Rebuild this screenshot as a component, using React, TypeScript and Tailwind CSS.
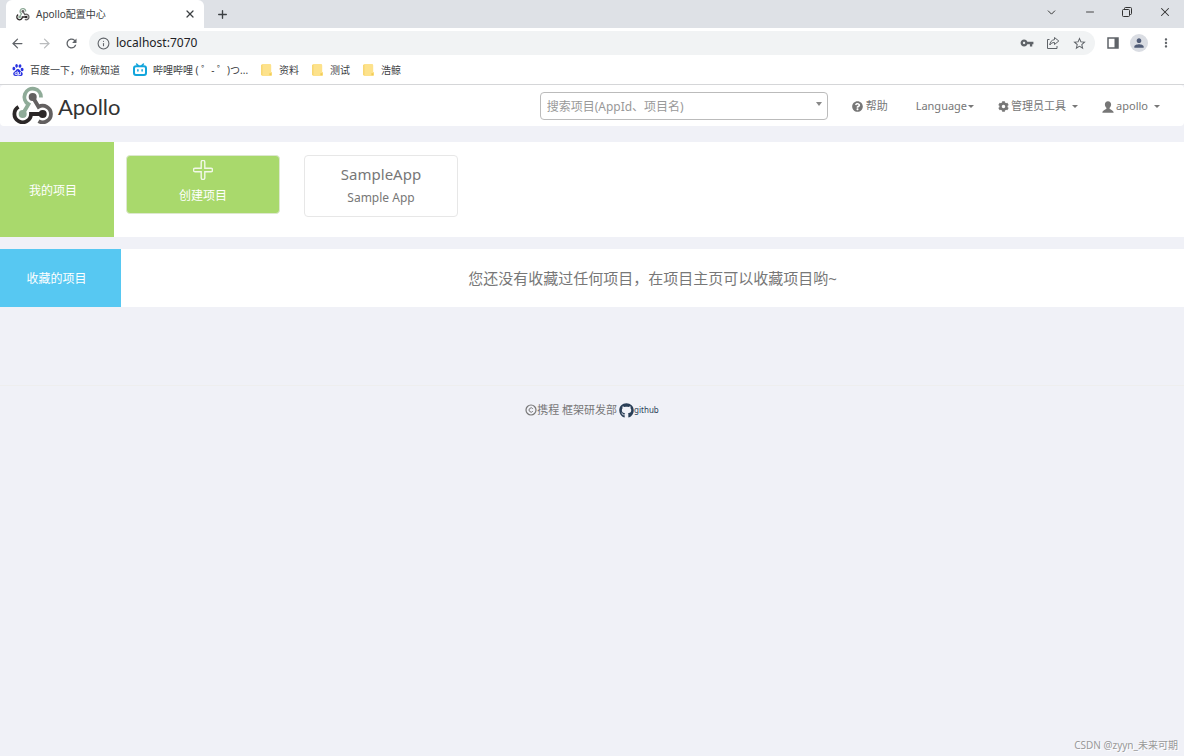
import React from 'react';
import { ArrowLeft, ArrowRight, ChevronDown, Info, Minus, Plus, X } from 'lucide-react';
import { FaCog, FaGithub, FaQuestionCircle } from 'react-icons/fa';
import { MdMoreVert, MdPerson, MdRefresh, MdStarBorder, MdVpnKey } from 'react-icons/md';
import { SiBaidu } from 'react-icons/si';

const ApolloMark: React.FC<{ className?: string }> = ({ className }) => (
    <svg viewBox="0 0 42 38" className={className} fill="none" strokeWidth="3.8" aria-hidden="true">
        <path d="M30.7 28H19A8.3 8.3 0 1 1 6.5 20.8" stroke="#2b2727" />
        <path d="M20.7 11L26.5 20.8A8.3 8.3 0 1 1 26.5 35.2" stroke="#636060" />
        <path d="M10.7 28L16.5 18.2A8.3 8.3 0 1 1 29 11.5" stroke="#8fab98" />
        <circle cx="20.7" cy="11" r="4" fill="#636060" />
        <circle cx="10.7" cy="28" r="4" fill="#8fab98" />
        <circle cx="30.7" cy="28" r="4" fill="#2b2727" />
    </svg>
);

const BilibiliIcon = () => (
    <svg viewBox="0 0 14 14" className="h-3.5 w-3.5" fill="none" stroke="#12a5dc" strokeWidth="2" strokeLinecap="round" aria-hidden="true">
        <rect x="1" y="3.2" width="12" height="8.8" rx="2" />
        <path d="M3.6 1l1.6 1.6M10.4 1L8.8 2.6" strokeWidth="1.5" />
        <path d="M4.9 6.8v1.2M9.1 6.8v1.2" strokeWidth="1.5" />
    </svg>
);

const FolderIcon = () => (
    <svg viewBox="0 0 12 12" className="h-3 w-3" aria-hidden="true">
        <path d="M1.5 0H9a1.2 1.2 0 0 1 1.2 1.2V8h.8v3a1 1 0 0 1-1 1H1.5A1.2 1.2 0 0 1 .3 10.8V1.2A1.2 1.2 0 0 1 1.5 0z" fill="#fde28c" />
        <path d="M.8 1v10" stroke="#f5cf5c" />
        <path d="M8.4 11.2V9.2h2v2z" fill="#f0cb55" />
    </svg>
);

const ShareIcon = () => (
    <svg viewBox="0 0 14 14" className="h-3.5 w-3.5" fill="none" stroke="#5f6368" strokeLinejoin="round" aria-hidden="true">
        <path d="M3.5 3.5h-2v9H11V10" />
        <path d="M8.5 1.5L12.8 5 8.5 8.5v-2c-2 0-3.5.7-4.7 2.5.2-3 1.8-5 4.7-5.4z" />
    </svg>
);

const PanelIcon = () => (
    <svg viewBox="0 0 12 12" className="h-3 w-3" aria-hidden="true">
        <path d="M1 1h10v10H1z" fill="none" stroke="#5f6368" strokeWidth="1.5" />
        <path d="M7.5 1H11v10H7.5z" fill="#5f6368" />
    </svg>
);

const RestoreIcon = () => (
    <svg viewBox="0 0 10 10" className="h-2.5 w-2.5" fill="none" stroke="#333" aria-hidden="true">
        <rect x=".5" y="2.5" width="7" height="7" rx="1" />
        <path d="M2.5 2.5v-1a1 1 0 0 1 1-1h5a1 1 0 0 1 1 1v5a1 1 0 0 1-1 1h-1" />
    </svg>
);

const UserIcon = () => (
    <svg viewBox="0 0 12 12" className="h-3 w-3" fill="currentColor" aria-hidden="true">
        <path d="M6 .3c2 0 3.1 1.4 3.1 3.2 0 1.3-.6 2.6-1.5 3.3v.9c.3.7 3.7 1.3 4 3.6v.5H.4v-.5C.7 9 4.1 8.4 4.4 7.7v-.9C3.5 6.1 2.9 4.8 2.9 3.5 2.9 1.7 4 .3 6 .3z" />
    </svg>
);

const PlusOutline = () => (
    <svg viewBox="0 0 20 20" className="h-5 w-5" fill="none" stroke="#f1f8e8" strokeWidth="1.4" aria-hidden="true">
        <path d="M8.2 2.2a1.8 1.8 0 0 1 3.6 0v6h6a1.8 1.8 0 0 1 0 3.6h-6v6a1.8 1.8 0 0 1-3.6 0v-6h-6a1.8 1.8 0 0 1 0-3.6h6z" />
    </svg>
);

const CopyrightIcon = () => (
    <svg viewBox="0 0 12 12" className="h-3 w-3" fill="none" stroke="currentColor" aria-hidden="true">
        <circle cx="6" cy="6" r="5" strokeWidth="1.2" />
        <path d="M7.8 4.7A2.1 2.1 0 1 0 7.8 7.3" />
    </svg>
);

const Caret = () => <span className="border-x-[3px] border-t-[3px] border-x-transparent border-t-current" />;

const bookmarks = [
    { label: '百度一下，你就知道', icon: <SiBaidu size={12} color="#2932e1" /> },
    { label: '哔哩哔哩 ( ゜- ゜)つ...', icon: <BilibiliIcon /> },
    { label: '资料', icon: <FolderIcon /> },
    { label: '测试', icon: <FolderIcon /> },
    { label: '浩鲸', icon: <FolderIcon /> },
];

const BrowserChrome = () => (
    <div className="border-b border-[#d5d6d8] bg-white text-[#3c4043]">
        {/* Tab strip */}
        <div className="flex h-7 items-center bg-[#dee1e6] pl-1.5">
            <div className="flex h-7 w-[198px] items-center rounded-t-md bg-white pl-2.5 pr-2">
                <ApolloMark className="h-3.5 w-3.5" />
                <span className="ml-1.5 flex-1 text-[10px]">Apollo配置中心</span>
                <button aria-label="Close tab"><X size={12} strokeWidth={2.5} /></button>
            </div>
            <button className="ml-3" aria-label="New tab"><Plus size={13} strokeWidth={2.5} /></button>
            <div className="mb-1 ml-auto flex items-center gap-[26px] pr-3 text-[#333]">
                <button aria-label="Search tabs"><ChevronDown size={13} strokeWidth={1.8} /></button>
                <button aria-label="Minimize"><Minus size={12} strokeWidth={1.8} /></button>
                <button aria-label="Restore"><RestoreIcon /></button>
                <button aria-label="Close"><X size={14} strokeWidth={1.8} /></button>
            </div>
        </div>

        {/* Toolbar */}
        <div className="flex h-[30px] items-center pl-2.5 pr-[11px]">
            <button aria-label="Back"><ArrowLeft size={15} color="#5f6368" /></button>
            <button className="ml-3" aria-label="Forward"><ArrowRight size={15} color="#babcbe" /></button>
            <button className="ml-3" aria-label="Reload"><MdRefresh size={15} color="#5f6368" /></button>
            <div className="ml-2.5 mr-3 flex h-6 flex-1 items-center rounded-full bg-[#f1f3f4] px-2">
                <Info size={13} color="#5f6368" />
                <input
                    aria-label="Address"
                    defaultValue="localhost:7070"
                    className="ml-1.5 min-w-0 flex-1 bg-transparent text-xs text-[#202124] outline-none"
                />
                <div className="flex items-center gap-3 text-[#5f6368]">
                    <button aria-label="Passwords"><MdVpnKey size={14} /></button>
                    <button aria-label="Share"><ShareIcon /></button>
                    <button aria-label="Bookmark"><MdStarBorder size={15} /></button>
                </div>
            </div>
            <div className="flex items-center gap-[11px] text-[#5f6368]">
                <button aria-label="Side panel"><PanelIcon /></button>
                <button className="flex h-[18px] w-[18px] items-center justify-center rounded-full bg-[#dadde3]" aria-label="Profile">
                    <MdPerson size={14} color="#505c77" />
                </button>
                <button aria-label="Menu"><MdMoreVert size={14} /></button>
            </div>
        </div>

        {/* Bookmarks */}
        <nav className="flex h-[26px] items-center gap-[13px] pb-0.5 pl-3 text-[10px]">
            {bookmarks.map(({ label, icon }) => (
                <a key={label} href="#" className="flex items-center gap-1.5 whitespace-pre">
                    {icon}
                    {label}
                </a>
            ))}
        </nav>
    </div>
);

const Header = () => (
    <header className="flex h-[41px] items-center rounded bg-white pl-3 pr-6">
        <a href="#" className="flex items-center gap-1 font-[family-name:Lato] text-[22px] text-[#333]">
            <ApolloMark className="mb-0.5 h-[38px] w-[42px]" />
            <span className="pt-0.5">Apollo</span>
        </a>
        <div className="relative ml-auto w-72">
            <select
                aria-label="搜索项目"
                className="h-7 w-full appearance-none rounded border border-[#bbb] bg-white px-1.5 pt-0.5 text-xs text-[#999] outline-none"
            >
                <option>搜索项目(AppId、项目名)</option>
            </select>
            <span className="pointer-events-none absolute right-1.5 top-2.5 border-x-[3px] border-t-4 border-x-transparent border-t-[#888]" />
        </div>
        <nav className="ml-6 flex items-center gap-6 pt-0.5 text-[11px] text-[#777]">
            <a href="#" className="flex items-center gap-[3px]"><FaQuestionCircle size={11} />帮助</a>
            <button className="ml-1 flex items-center gap-px">Language<Caret /></button>
            <button className="flex items-center gap-0.5"><FaCog size={11} />管理员工具<span className="w-0.5" /><Caret /></button>
            <button className="flex items-center gap-0.5"><UserIcon />apollo<span className="w-0.5" /><Caret /></button>
        </nav>
    </header>
);

export default function App() {
    return (
        <div className="relative min-h-screen bg-[#f0f1f7] font-['Noto_Sans','Noto_Sans_CJK_SC',sans-serif]">
            <BrowserChrome />
            <Header />

            <main>
                {/* My projects */}
                <section className="mt-4 flex min-h-[95px] bg-white">
                    <h2 className="flex w-[114px] items-center justify-center bg-[#a9d96c] pr-2 pt-0.5 text-xs text-white">我的项目</h2>
                    <div className="flex flex-1 items-start gap-6 px-3 pt-[13px]">
                        <button className="flex h-[59px] w-[154px] flex-col items-center rounded border border-[#dde8cf] bg-[#a9d96c] pt-1 text-xs text-white">
                            <PlusOutline />
                            <span className="mt-2">创建项目</span>
                        </button>
                        <a href="#" className="flex h-[62px] w-[154px] flex-col items-center rounded border border-[#e7e7e7] pt-1.5 text-[#777]">
                            <span className="text-[15px] leading-6">SampleApp</span>
                            <span className="text-xs leading-6">Sample App</span>
                        </a>
                    </div>
                </section>

                {/* Favorite projects */}
                <section className="mt-3 flex min-h-[58px] bg-white">
                    <h2 className="flex w-[121px] items-center justify-center bg-[#57c8f2] pr-2 pt-0.5 text-xs text-white">收藏的项目</h2>
                    <p className="flex flex-1 items-center justify-center text-[15px] text-[#777]">
                        您还没有收藏过任何项目，在项目主页可以收藏项目哟~
                    </p>
                </section>
            </main>

            <footer className="mt-[78px] flex items-center justify-center border-t border-[#eee] pt-4 text-[11px] text-[#777]">
                <CopyrightIcon />
                携程 框架研发部
                <a href="#" className="ml-0.5 flex items-center text-[8px] text-[#2a3f57]">
                    <FaGithub size={15} />
                    github
                </a>
            </footer>

            {/* Watermark */}
            <div className="absolute bottom-[3px] right-1.5 text-[10px] text-[#999] [text-shadow:1px_1px_0_#fff]">CSDN @zyyn_未来可期</div>
        </div>
    );
}
